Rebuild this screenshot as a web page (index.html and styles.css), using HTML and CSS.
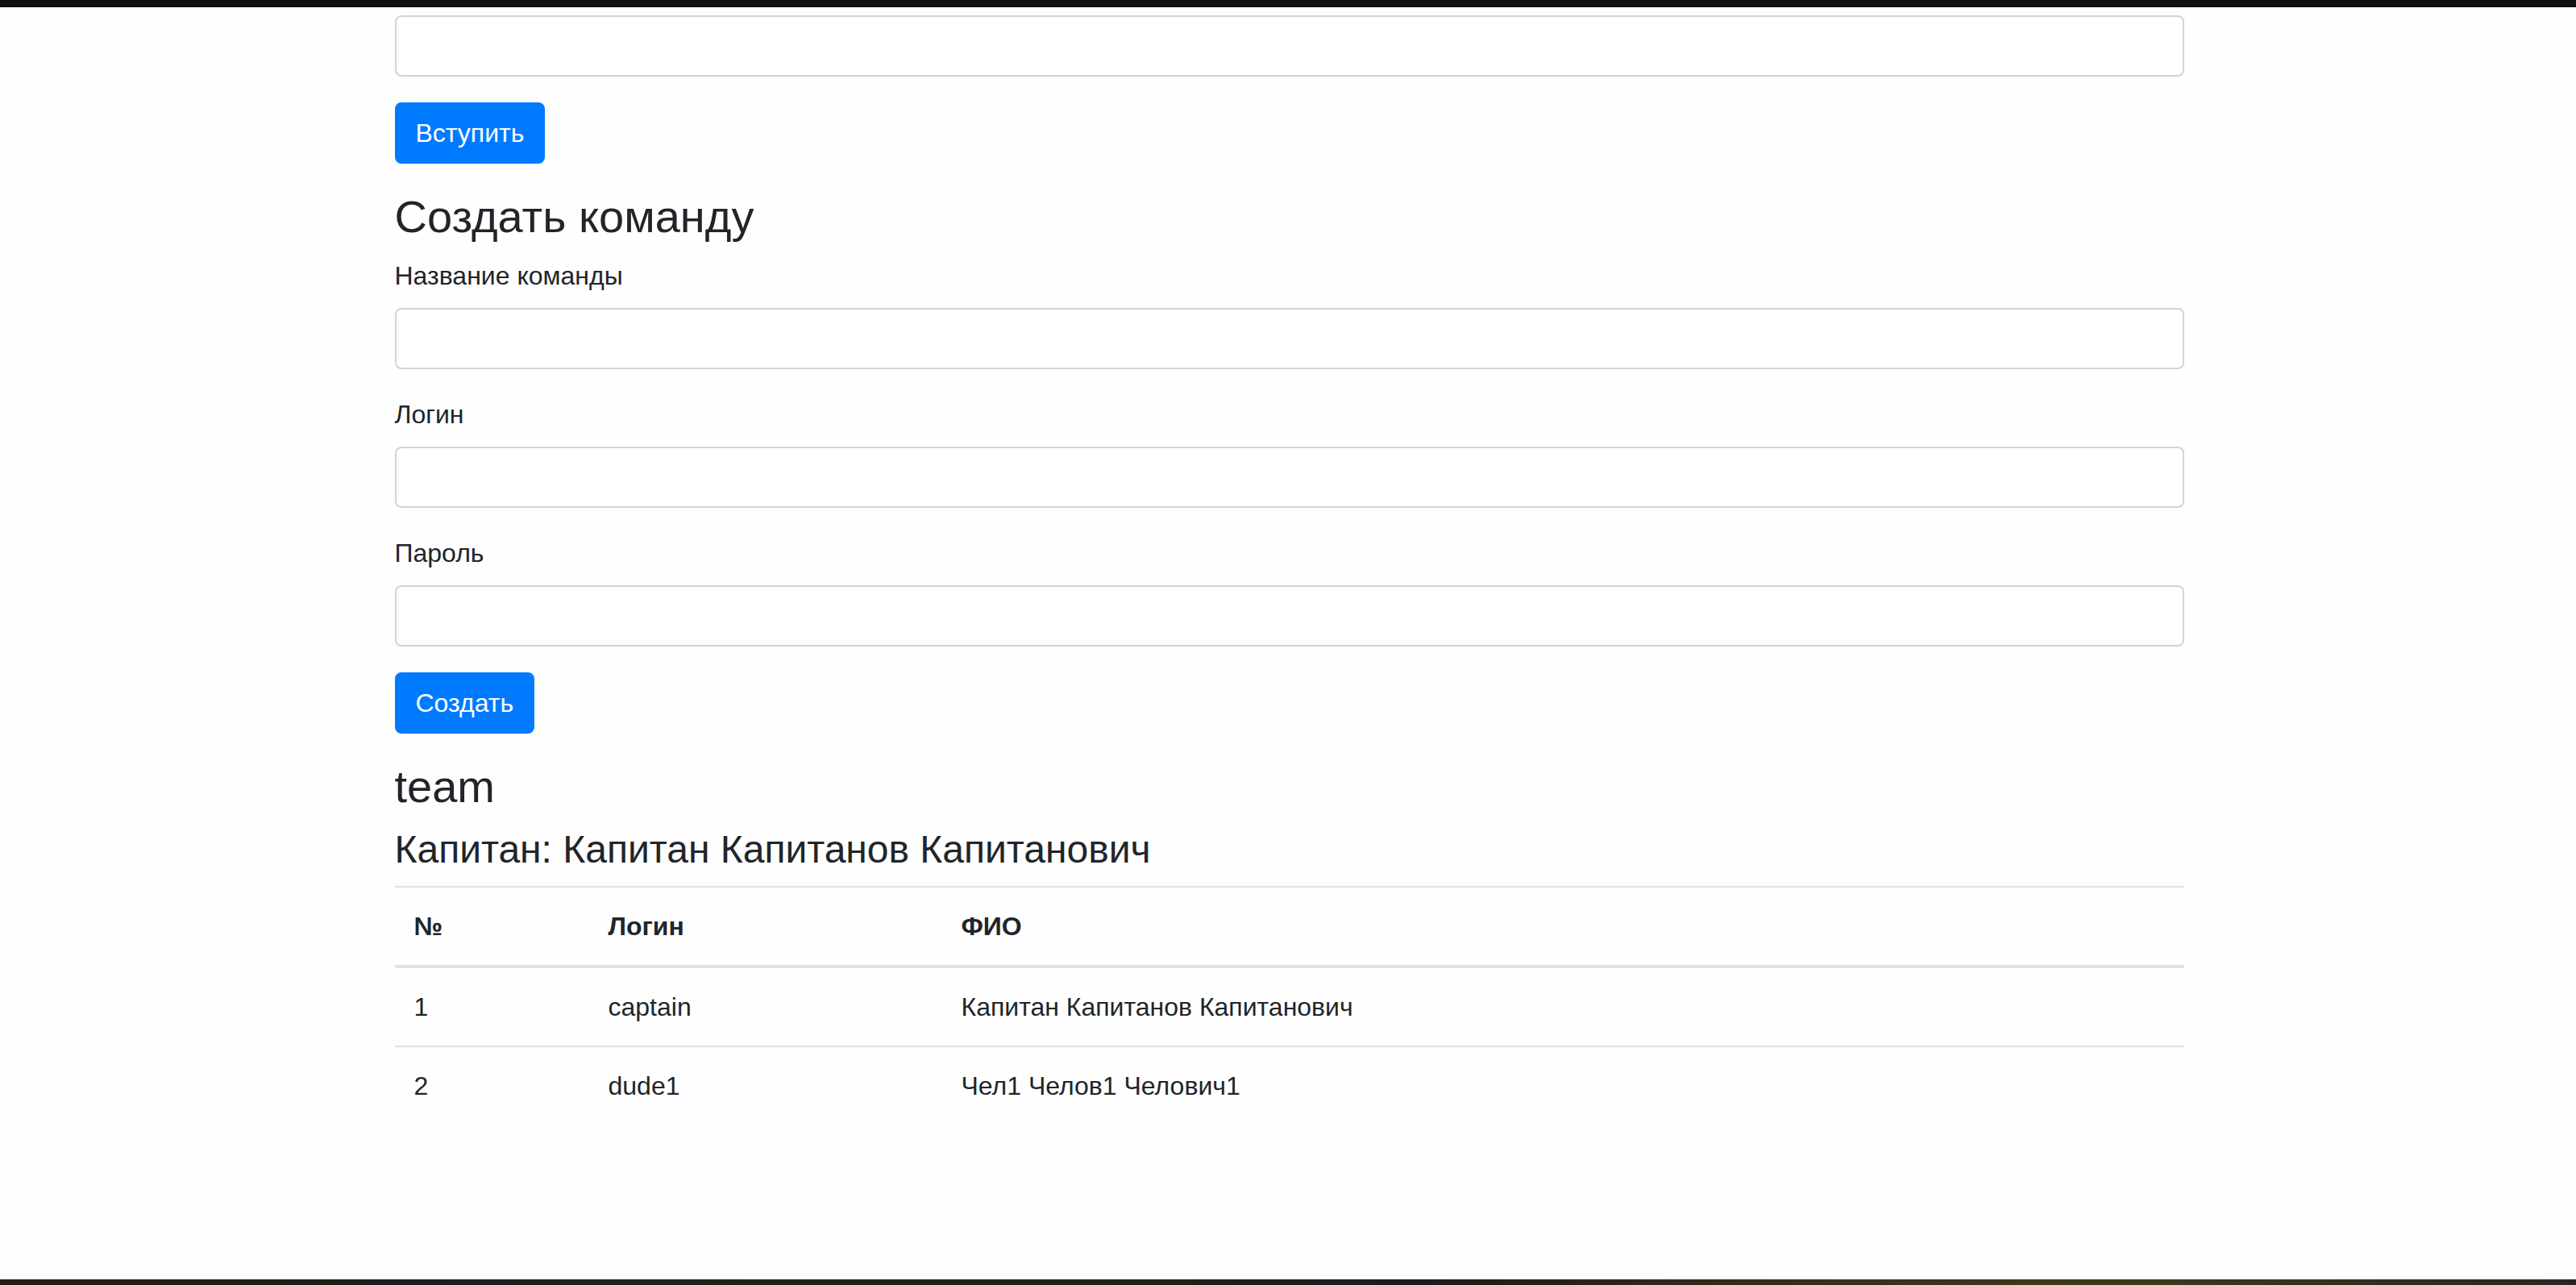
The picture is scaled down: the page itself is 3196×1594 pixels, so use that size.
FILE: index.html
```html
<!DOCTYPE html>
<html lang="ru">
<head>
<meta charset="utf-8">
<title>Команда</title>
<link rel="stylesheet" href="styles.css">
</head>
<body>
<div class="screen">
  <div class="topbar"></div>
  <main class="page">
    <div class="container">
      <form class="form">
        <div class="form-group">
          <input class="form-control" type="text">
        </div>
        <button class="btn" type="button">Вступить</button>
      </form>

      <h3 class="h3">Создать команду</h3>
      <form class="form">
        <div class="form-group">
          <label class="label">Название команды</label>
          <input class="form-control" type="text">
        </div>
        <div class="form-group">
          <label class="label">Логин</label>
          <input class="form-control" type="text">
        </div>
        <div class="form-group">
          <label class="label">Пароль</label>
          <input class="form-control" type="password">
        </div>
        <button class="btn" type="button">Создать</button>
      </form>

      <h3 class="h3">team</h3>
      <h4 class="h4">Капитан: Капитан Капитанов Капитанович</h4>
      <table class="table">
        <thead>
          <tr>
            <th class="col-num">№</th>
            <th class="col-login">Логин</th>
            <th>ФИО</th>
          </tr>
        </thead>
        <tbody>
          <tr>
            <td>1</td>
            <td>captain</td>
            <td>Капитан Капитанов Капитанович</td>
          </tr>
          <tr>
            <td>2</td>
            <td>dude1</td>
            <td>Чел1 Челов1 Челович1</td>
          </tr>
        </tbody>
      </table>
    </div>
  </main>
  <div class="bottombar"></div>
</div>
</body>
</html>
```

FILE: styles.css
```css
* { box-sizing: border-box; }

html, body {
  margin: 0;
  padding: 0;
  height: 100%;
}

body {
  font-family: "Liberation Sans", Arial, sans-serif;
  font-size: 32px;
  line-height: 1.5;
  color: #212529;
  background: #ffffff;
}

.screen {
  display: flex;
  flex-direction: column;
  height: 100vh;
  overflow: hidden;
}

.topbar {
  flex: 0 0 9px;
  background: #101010;
}

.bottombar {
  flex: 0 0 7px;
  background: linear-gradient(90deg, #2a1a14 0%, #1c1f1c 15%, #22231c 40%, #1d1a1a 55%, #3a2c1c 70%, #3c3a1c 82%, #2a2424 100%);
}

.page {
  flex: 1 1 auto;
  background: #fefefe;
  overflow: hidden;
  padding-left: 3px;
}

.container {
  width: 2220px;
  margin: 0 auto;
  padding-top: 10px;
}

.form {
  margin: 0 0 32px 0;
}

.form-group {
  margin-bottom: 32px;
}

.label {
  display: inline-block;
  margin-bottom: 16px;
}

.form-control {
  display: block;
  width: 100%;
  height: 76px;
  padding: 12px 24px;
  font-family: inherit;
  font-size: 32px;
  line-height: 1.5;
  color: #495057;
  background: #fff;
  border: 2px solid #ced4da;
  border-radius: 8px;
  outline: none;
}

.btn {
  display: inline-block;
  height: 76px;
  padding: 12px 24px;
  font-family: inherit;
  font-size: 32px;
  line-height: 1.5;
  color: #fff;
  background: #007bff;
  border: 2px solid #007bff;
  border-radius: 8px;
  cursor: pointer;
}

.h3, .h4 {
  margin: 0 0 16px 0;
  font-weight: 500;
  line-height: 1.2;
}

.h3 { font-size: 56px; }
.h4 { font-size: 48px; }

.table {
  width: 100%;
  border-collapse: collapse;
  margin-bottom: 32px;
}

.table th,
.table td {
  padding: 24px;
  vertical-align: top;
  border-top: 2px solid #dee2e6;
  text-align: left;
}

.table th {
  font-weight: 700;
}

.table thead th {
  vertical-align: bottom;
  border-bottom: 4px solid #dee2e6;
}

.col-num { width: 241px; }
.col-login { width: 438px; }
```
